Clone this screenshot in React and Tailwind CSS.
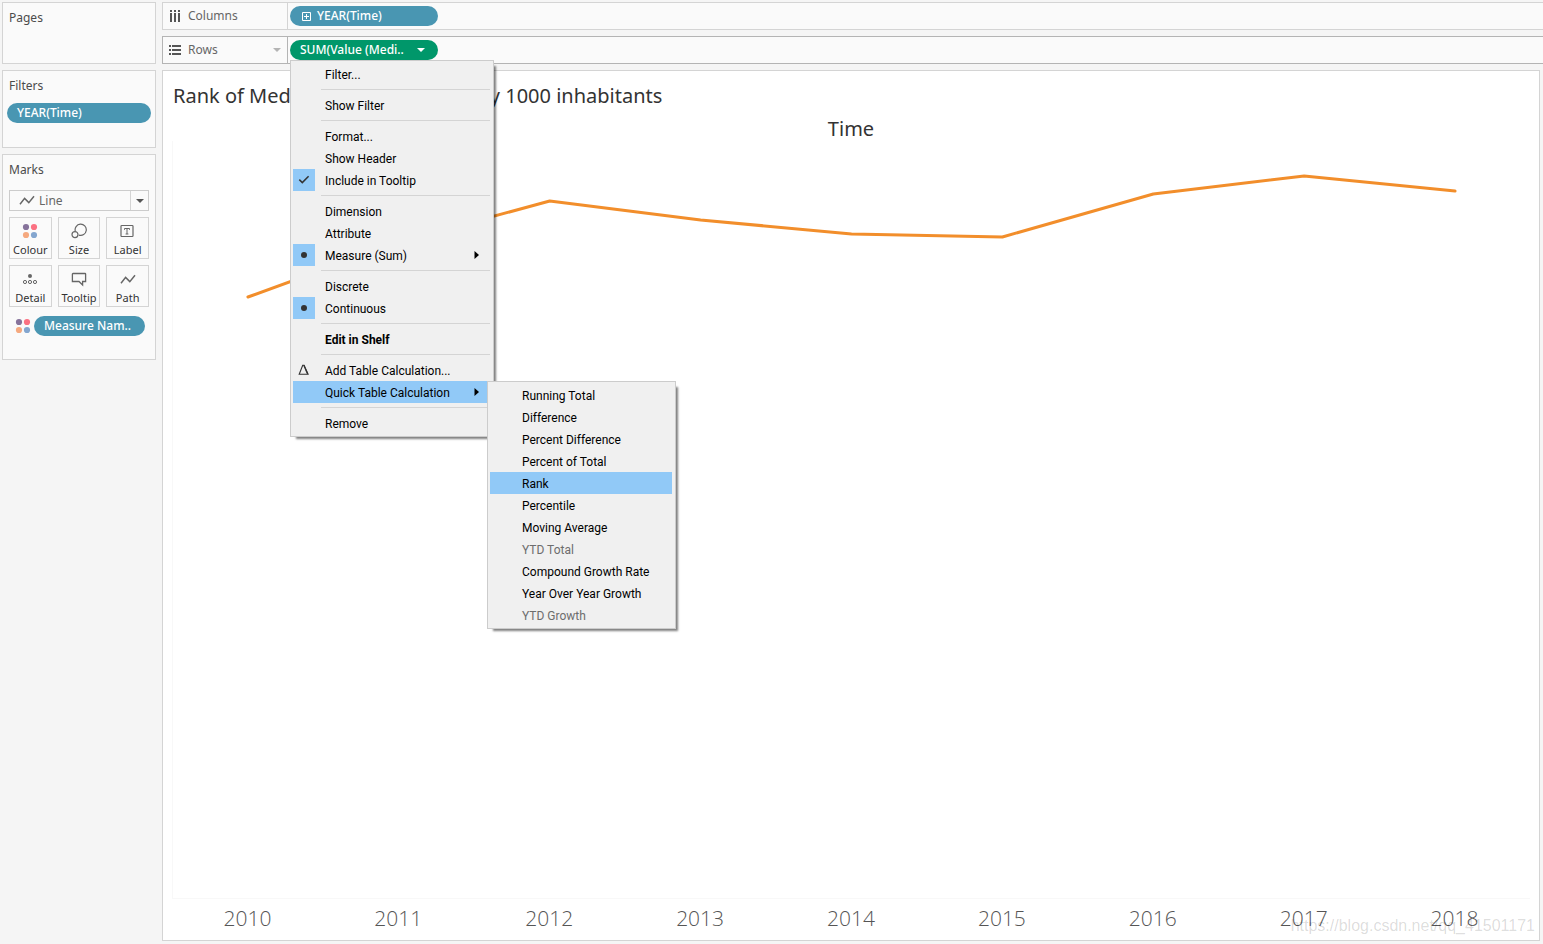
import { useState } from 'react'

const YEARS = [
  { year: 2010, y: 156 },
  { year: 2011, y: 101 },
  { year: 2012, y: 60 },
  { year: 2013, y: 79 },
  { year: 2014, y: 93 },
  { year: 2015, y: 96 },
  { year: 2016, y: 53 },
  { year: 2017, y: 35 },
  { year: 2018, y: 50 },
]

const QUICK_CALCS = [
  { label: 'Running Total' },
  { label: 'Difference' },
  { label: 'Percent Difference' },
  { label: 'Percent of Total' },
  { label: 'Rank' },
  { label: 'Percentile' },
  { label: 'Moving Average' },
  { label: 'YTD Total', disabled: true },
  { label: 'Compound Growth Rate' },
  { label: 'Year Over Year Growth' },
  { label: 'YTD Growth', disabled: true },
]

const MENU = [
  [{ label: 'Filter...' }],
  [{ label: 'Show Filter' }],
  [{ label: 'Format...' }, { label: 'Show Header' }, { label: 'Include in Tooltip', mark: 'check' }],
  [{ label: 'Dimension' }, { label: 'Attribute' }, { label: 'Measure (Sum)', mark: 'dot', arrow: true }],
  [{ label: 'Discrete' }, { label: 'Continuous', mark: 'dot' }],
  [{ label: 'Edit in Shelf', bold: true }],
  [
    { label: 'Add Table Calculation...', mark: 'delta' },
    { label: 'Quick Table Calculation', arrow: true, submenu: QUICK_CALCS },
  ],
  [{ label: 'Remove' }],
]

function ColourDots() {
  return (
    <svg className="shrink-0" width="16" height="16" viewBox="0 0 16 16" aria-hidden="true">
      <circle cx="4" cy="4" r="3.1" fill="#86739b" />
      <circle cx="12" cy="4" r="3.1" fill="#fb7182" />
      <circle cx="4" cy="12" r="3.1" fill="#f5a97f" />
      <circle cx="12" cy="12" r="3.1" fill="#84a6cf" />
    </svg>
  )
}

function SizeIcon() {
  return (
    <svg className="shrink-0" width="16" height="16" viewBox="0 0 16 16" fill="none" stroke="#666" strokeWidth="1.2" aria-hidden="true">
      <path d="M4.3 8.3A5.6 5.6 0 1 1 7.9 12.1" />
      <circle cx="4" cy="11.6" r="3" />
    </svg>
  )
}

function LabelIcon() {
  return (
    <svg className="shrink-0" width="16" height="16" viewBox="0 0 16 16" fill="none" stroke="#666" aria-hidden="true">
      <rect x="1" y="2.5" width="12" height="11" rx="0.8" strokeWidth="1.2" />
      <path d="M4.5 6.8V5.5h5v1.3M7 5.5v5.5M5.6 11h2.8" />
    </svg>
  )
}

function DetailIcon() {
  return (
    <svg className="shrink-0" width="16" height="16" viewBox="0 0 16 16" fill="none" stroke="#666" aria-hidden="true">
      <circle cx="8" cy="5" r="2" fill="#666" stroke="none" />
      <circle cx="3" cy="11" r="1.6" />
      <circle cx="8" cy="11" r="1.6" />
      <circle cx="13" cy="11" r="1.6" />
    </svg>
  )
}

function TooltipIcon() {
  return (
    <svg className="shrink-0" width="16" height="16" viewBox="0 0 16 16" fill="none" stroke="#666" strokeWidth="1.3" aria-hidden="true">
      <path d="M2 2.5h12a.6.6 0 0 1 .6.6v7.4h-3v3.4L8 10.5H1.4V3.1a.6.6 0 0 1 .6-.6Z" />
    </svg>
  )
}

function LineIcon() {
  return (
    <svg className="shrink-0" width="16" height="16" viewBox="0 0 16 16" fill="none" stroke="#666" strokeWidth="1.5" aria-hidden="true">
      <path d="M1 12.2 5.6 6.4l4.2 4.2L15 4.2" />
    </svg>
  )
}

const MARK_BUTTONS = [
  { label: 'Colour', Icon: ColourDots },
  { label: 'Size', Icon: SizeIcon },
  { label: 'Label', Icon: LabelIcon },
  { label: 'Detail', Icon: DetailIcon },
  { label: 'Tooltip', Icon: TooltipIcon },
  { label: 'Path', Icon: LineIcon },
]

function MarkIndicator({ mark }) {
  if (!mark) return <span className="w-[22px]" />
  if (mark === 'delta') {
    return (
      <span className="w-[22px] h-[22px] flex items-center justify-center">
        <svg width="12" height="14" viewBox="0 0 12 14" fill="none" stroke="#333" aria-hidden="true">
          <path d="M1.2 11.2 4.7 2.2h1.4l4 9Z" strokeWidth="1.1" />
          <path d="m5.8 2.2 3.8 8.8" strokeWidth="1.3" />
        </svg>
      </span>
    )
  }
  return (
    <span className="w-[22px] h-[22px] flex items-center justify-center bg-[#91c9f7]">
      {mark === 'check' ? (
        <svg width="12" height="12" viewBox="0 0 12 12" fill="none" stroke="#333" strokeWidth="1.5" aria-hidden="true">
          <path d="m1.3 5.6 3 3L10.6 2.2" />
        </svg>
      ) : (
        <svg width="6" height="6" viewBox="0 0 6 6" aria-hidden="true">
          <circle cx="3" cy="3" r="3" fill="#333" />
        </svg>
      )}
    </span>
  )
}

function SubMenu({ items }) {
  return (
    <div
      role="menu"
      className="absolute top-0 left-[194px] w-[189px] border border-[#ccc] bg-[#f0f0f0] py-0.5 pl-0.5 pr-[3px] shadow-[4px_4px_2px_-2px_rgba(0,0,0,0.5)]"
    >
      {items.map((item) => (
        <button
          key={item.label}
          type="button"
          role="menuitem"
          disabled={item.disabled}
          className={`block w-full h-[22px] pt-px pl-8 text-left text-xs leading-[22px] whitespace-nowrap ${
            item.disabled ? 'text-[#6d6d6d]' : 'text-black'
          } ${item.label === 'Rank' ? 'bg-[#91c9f7]' : ''}`}
        >
          {item.label}
        </button>
      ))}
    </div>
  )
}

function PillMenu() {
  return (
    <div
      role="menu"
      className="absolute z-10 top-full left-0 w-[204px] border border-[#ccc] bg-[#f0f0f0] py-0.5 pl-0.5 pr-[3px] font-[Roboto,'Noto_Sans',sans-serif] shadow-[4px_4px_2px_-2px_rgba(0,0,0,0.5)]"
    >
      {MENU.map((group, i) => (
        <div key={group[0].label}>
          {i > 0 && <hr className="my-1 ml-7 border-[#d4d4d4]" />}
          {group.map((item) => (
            <div key={item.label} className="relative">
              <button
                type="button"
                role="menuitem"
                className={`flex items-center w-full h-[22px] text-left text-xs leading-[22px] text-black whitespace-nowrap ${
                  item.submenu ? 'bg-[#91c9f7]' : ''
                } ${item.bold ? 'font-bold' : ''}`}
              >
                <MarkIndicator mark={item.mark} />
                <span className="flex-1 pt-px pl-2.5">{item.label}</span>
                {item.arrow && (
                  <svg width="5" height="8" viewBox="0 0 5 8" className="mr-[11px]" aria-hidden="true">
                    <path d="M0.5 0 5 4 0.5 8Z" />
                  </svg>
                )}
              </button>
              {item.submenu && <SubMenu items={item.submenu} />}
            </div>
          ))}
        </div>
      ))}
    </div>
  )
}

function Card({ title, className, children }) {
  return (
    <section className={`border border-[#d4d4d4] bg-[#fafafa] px-1.5 pt-1.5 ${className}`}>
      <h2 className="text-xs leading-[18px] text-[#4b4b4b]">{title}</h2>
      {children}
    </section>
  )
}

export default function App() {
  const [markType, setMarkType] = useState('Line')
  const points = YEARS.map((d, i) => `${i * 151 + 75},${d.y}`).join(' ')

  return (
    <div className="flex gap-1.5 min-h-screen pl-0.5 pt-0.5 bg-[#f5f5f5] overflow-hidden font-['Noto_Sans','Open_Sans',sans-serif]">
      {/* Left cards */}
      <aside className="w-[154px] shrink-0 flex flex-col gap-1.5">
        <Card title="Pages" className="h-[62px]" />

        <Card title="Filters" className="h-[78px]">
          <button
            type="button"
            className="block -mx-0.5 mt-2 w-36 h-5 rounded-full bg-[#4996b2] px-2.5 text-left text-xs leading-5 font-medium text-white"
          >
            YEAR(Time)
          </button>
        </Card>

        <Card title="Marks" className="h-[206px]">
          <div className="relative mt-[11px] flex h-[21px] border border-[#ccc] text-[#666]">
            <select
              aria-label="Mark type"
              value={markType}
              onChange={(e) => setMarkType(e.target.value)}
              className="w-full appearance-none bg-transparent pl-[29px] text-xs leading-[18px] outline-none"
            >
              <option>Line</option>
              <option>Bar</option>
              <option>Area</option>
            </select>
            <span className="absolute left-[9px] top-px pointer-events-none">
              <LineIcon />
            </span>
            <span className="absolute right-0 inset-y-0 w-[18px] flex items-center justify-center border-l border-[#d4d4d4] pointer-events-none">
              <svg width="8" height="4" viewBox="0 0 8 4" aria-hidden="true">
                <path d="M0 0h8L4 4Z" fill="#555" />
              </svg>
            </span>
          </div>

          <div className="mt-1.5 grid grid-cols-3 gap-1.5">
            {MARK_BUTTONS.map(({ label, Icon }) => (
              <button
                key={label}
                type="button"
                className="h-[42px] flex flex-col items-center border border-[#d4d4d4] pt-[5px] text-[11px] leading-[22px] text-[#333]"
              >
                <Icon />
                {label}
              </button>
            ))}
          </div>

          <div className="mt-[9px] flex items-center gap-[3px] pl-1.5">
            <ColourDots />
            <button
              type="button"
              className="w-[111px] h-5 rounded-full bg-[#4996b2] px-2.5 text-left text-xs leading-5 font-medium text-white whitespace-nowrap"
            >
              Measure Nam..
            </button>
          </div>
        </Card>
      </aside>

      <main className="flex-1 min-w-0 flex flex-col gap-1.5">
        {/* Columns shelf */}
        <div className="h-7 shrink-0 flex items-center border border-r-0 border-[#d4d4d4] bg-[#fafafa]">
          <div className="w-[125px] self-stretch flex items-center gap-1.5 border-r border-[#d4d4d4] pl-1.5 text-xs text-[#666]">
            <svg width="13" height="12" viewBox="0 0 13 12" fill="#555" aria-hidden="true">
              <path d="M1 0h2v2H1zM5 0h2v2H5zM9 0h2v2H9zM1 3h2v9H1zM5 3h2v9H5zM9 3h2v9H9z" />
            </svg>
            Columns
          </div>
          <button
            type="button"
            className="ml-0.5 w-[148px] h-5 flex items-center gap-1.5 rounded-full bg-[#4996b2] pl-3 text-xs font-medium text-white"
          >
            <svg width="9" height="9" viewBox="0 0 9 9" fill="none" stroke="#fff" aria-hidden="true">
              <path d="M0.5 0.5h8v8h-8ZM4.5 2v5M2 4.5h5" />
            </svg>
            YEAR(Time)
          </button>
        </div>

        {/* Rows shelf */}
        <div className="h-7 shrink-0 flex items-center border border-r-0 border-[#b4b4b4] bg-[#fafafa]">
          <div className="w-[125px] self-stretch flex items-center gap-1.5 border-r border-[#b4b4b4] pl-1.5 pr-1.5 text-xs text-[#666]">
            <svg width="13" height="10" viewBox="0 0 13 10" fill="#555" aria-hidden="true">
              <path d="M0 0h2v2H0zM3 0h9v2H3zM0 4h2v2H0zM3 4h9v2H3zM0 8h2v2H0zM3 8h9v2H3z" />
            </svg>
            <span className="flex-1">Rows</span>
            <svg width="8" height="4" viewBox="0 0 8 4" aria-hidden="true">
              <path d="M0 0h8L4 4Z" fill="#b4b4b4" />
            </svg>
          </div>
          <div className="relative ml-0.5">
            <button
              type="button"
              aria-haspopup="menu"
              aria-expanded="true"
              className="w-[148px] h-5 flex items-center justify-between rounded-full bg-[#00976a] pl-2.5 pr-[13px] text-xs font-medium text-white whitespace-nowrap"
            >
              SUM(Value (Medi..
              <svg width="8" height="4" viewBox="0 0 8 4" aria-hidden="true">
                <path d="M0 0h8L4 4Z" fill="#fff" />
              </svg>
            </button>
            <PillMenu />
          </div>
        </div>

        {/* Worksheet */}
        <section className="relative flex-1 mr-[3px] mb-[3px] flex flex-col border border-[#d4d4d4] bg-white px-[9px] pt-[13px] pb-2.5">
          <h1 className="pl-px text-xl leading-6 text-[#333] whitespace-nowrap">
            Rank of Medical Technology use by 1000 inhabitants
          </h1>
          <p className="mt-[9px] text-center text-xl leading-6 text-[#333]">Time</p>
          <div className="relative flex-1 border-l border-b border-[#f8f8f8]">
            <svg
              className="absolute inset-0 w-full h-full"
              viewBox="0 0 1358 757"
              preserveAspectRatio="none"
              role="img"
              aria-label="Line chart by year"
            >
              <polyline
                points={points}
                fill="none"
                stroke="#f28e2b"
                strokeWidth="3"
                strokeLinecap="round"
                strokeLinejoin="round"
                vectorEffect="non-scaling-stroke"
              />
            </svg>
          </div>
          <div className="mt-[7px] grid grid-cols-9 text-center font-['Open_Sans','Noto_Sans',sans-serif] text-[21px] leading-6 font-light text-[#555]">
            {YEARS.map((d) => (
              <span key={d.year}>{d.year}</span>
            ))}
          </div>
          <span className="absolute right-1 bottom-1 font-['Liberation_Sans',sans-serif] text-base leading-5 text-black/15">
            https://blog.csdn.net/qq_41501171
          </span>
        </section>
      </main>
    </div>
  )
}
